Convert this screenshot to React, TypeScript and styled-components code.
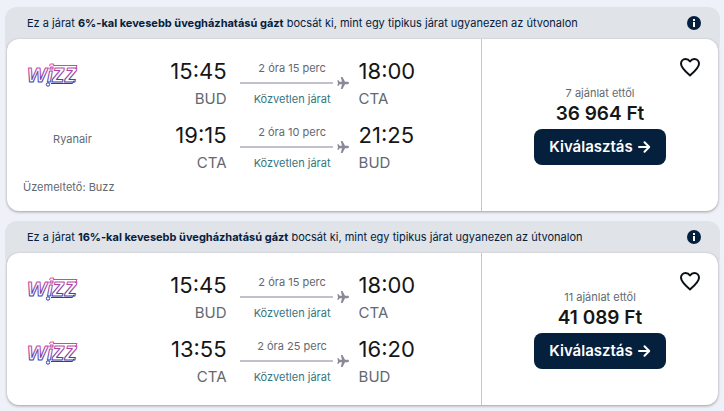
import React from "react";
import styled, { createGlobalStyle } from "styled-components";

const GlobalStyle = createGlobalStyle`
  *, *::before, *::after { box-sizing: border-box; }
  body { margin: 0; background: #eef1f7; color: #161616; font-family: Inter, "Liberation Sans", sans-serif; }
`;

const Results = styled.main`
  display: flex;
  flex-direction: column;
  gap: 10px;
  padding: 7px 4px 6px 5px;
`;

const Ticket = styled.article`
  display: flex;
  flex-direction: column;
`;

const EcoBanner = styled.header`
  display: flex;
  align-items: center;
  justify-content: space-between;
  min-height: 48px;
  padding: 0 19px 16px 22px;
  border-radius: 12px;
  background: #e0e3e8;
  color: #05203c;
  font-size: 11px;
  line-height: 16px;
`;

const BannerText = styled.p`
  margin: 0;
  b { font-weight: 700; }
`;

const IconButton = styled.button`
  display: flex;
  padding: 0;
  border: 0;
  background: none;
  color: #05203c;
  cursor: pointer;
`;

const Card = styled.div`
  display: grid;
  grid-template-columns: 2fr 1fr;
  margin: -16px 2px 0;
  border-radius: 12px;
  background: #fff;
  box-shadow: 0 1px 3px rgba(37, 32, 31, 0.4);
  position: relative;
`;

const Legs = styled.div`
  padding: 16px;
`;

const Leg = styled.section`
  display: grid;
  grid-template-columns: 99px 8fr 112px 9fr;
  column-gap: 10px;
  padding-bottom: 8px;
  &:last-of-type { padding-bottom: 0; }
`;

const Airline = styled.div`
  display: flex;
  align-items: center;
  justify-content: center;
  height: 40px;
  color: #626971;
  font-size: 11px;
  line-height: 16px;
`;

const LogoBox = styled.div`
  padding: 4px;
  svg { display: block; }
`;

const Stop = styled.div<{ $align: "left" | "right" }>`
  text-align: ${(p) => p.$align};
`;

const Time = styled.div`
  font-size: 22px;
  line-height: 32px;
`;

const Code = styled.div`
  color: #626971;
  font-size: 15px;
  line-height: 24px;
`;

const Route = styled.div`
  display: flex;
  flex-direction: column;
  align-items: center;
  padding: 5px 0 0 3px;
  font-size: 11px;
  line-height: 16px;
`;

const Track = styled.div`
  display: flex;
  align-items: center;
  gap: 4px;
  align-self: stretch;
  height: 14px;
  margin-bottom: 1px;
  &::before { content: ""; flex: 1; height: 2px; background: #c0c1cf; }
`;

const RouteLabel = styled.span<{ $direct?: boolean }>`
  padding-right: 4px;
  color: ${(p) => (p.$direct ? "#36757e" : "#626971")};
`;

const Operator = styled.p`
  margin: 4px 0 0;
  color: #626971;
  font-size: 11px;
  line-height: 16px;
`;

const Offer = styled.aside`
  display: flex;
  flex-direction: column;
  align-items: center;
  justify-content: center;
  border-left: 1px solid #c1c7cf;
`;

const OfferCount = styled.span`
  color: #626971;
  font-size: 11px;
  line-height: 16px;
`;

const Price = styled.strong`
  font-size: 19px;
  font-weight: 600;
  line-height: 26px;
  margin-bottom: 2px;
`;

const SelectButton = styled.button`
  display: flex;
  align-items: center;
  justify-content: center;
  gap: 4px;
  height: 36px;
  padding: 0 15px;
  border: 0;
  border-radius: 8px;
  background: #05203c;
  color: #fff;
  font: 600 15px/24px Inter, "Liberation Sans", sans-serif;
  cursor: pointer;
`;

const SaveButton = styled(IconButton)`
  position: absolute;
  top: 16px;
  right: 16px;
`;

const WizzLogo = ({ id }: { id: string }) => (
  <svg width="58" height="32" viewBox="0 0 58 32" role="img" aria-label="Wizz Air">
    <defs>
      <linearGradient id={id} gradientUnits="userSpaceOnUse" x1="0" y1="5" x2="0" y2="25">
        <stop offset="0" stopColor="#e8459f" />
        <stop offset="0.5" stopColor="#8a3fa6" />
        <stop offset="1" stopColor="#2f3aa5" />
      </linearGradient>
    </defs>
    <g fill="none" stroke={`url(#${id})`} strokeWidth="1" strokeLinejoin="round">
      <text y="23" fontFamily="Liberation Sans, sans-serif" fontStyle="italic" fontWeight="700">
        <tspan x="0" fontSize="21">W</tspan>
        <tspan x="20" fontSize="21">i</tspan>
        <tspan x="25" fontSize="25">zz</tspan>
      </text>
      <path d="M22.500 7l.8-2h3.500l-.5 1.500h23.700l-1.500 3.500" />
      <path d="M24 24.500h21.500l1.500-3" />
      <circle cx="21" cy="25.500" r="1.700" />
    </g>
  </svg>
);

const Plane = () => (
  <svg width="12" height="12" viewBox="0 0 12 12" aria-hidden="true">
    <path fill="#8c8799" d="M12 6c0 .6-.6 1.200-1.300 1.200H8L5.500 12H3.800l1.200-4.800H2.600l-1 1.600H.3L1 6 .3 3.200h1.300l1 1.600H5L3.800 0h1.700L8 4.800h2.700C11.400 4.800 12 5.400 12 6z" />
  </svg>
);

const Info = () => (
  <svg width="14" height="14" viewBox="0 0 14 14" aria-hidden="true">
    <circle cx="7" cy="7" r="7" fill="#05203c" />
    <path stroke="#fff" strokeWidth="2" d="M7 6v5M7 3v2" />
  </svg>
);

const Heart = () => (
  <svg width="24" height="24" viewBox="0 0 24 24" fill="none" stroke="#0b0f18" strokeWidth="2" strokeLinejoin="round" aria-hidden="true">
    <path d="M12 20.500C8 17 3 12.800 3 8.800 3 6 5 4 7.500 4 9.500 4 11 5 12 6.500 13 5 14.500 4 16.500 4 19 4 21 6 21 8.800c0 4-5 8.200-9 11.700z" />
  </svg>
);

const Arrow = () => (
  <svg width="14" height="14" viewBox="0 0 14 14" fill="none" stroke="#fff" strokeWidth="2" strokeLinecap="round" strokeLinejoin="round" aria-hidden="true">
    <path d="M2 7h10M7.500 2.200L12.200 7l-4.700 4.800" />
  </svg>
);

type Flight = { airline: string; from: string; to: string; depart: string; arrive: string; duration: string };
type Result = { id: string; saving: string; offers: string; price: string; operator?: string; flights: Flight[] };

const results: Result[] = [
  {
    id: "a", saving: "6%", offers: "7 ajánlat ettől", price: "36 964 Ft", operator: "Üzemeltető: Buzz",
    flights: [
      { airline: "wizz", from: "BUD", to: "CTA", depart: "15:45", arrive: "18:00", duration: "2 óra 15 perc" },
      { airline: "Ryanair", from: "CTA", to: "BUD", depart: "19:15", arrive: "21:25", duration: "2 óra 10 perc" },
    ],
  },
  {
    id: "b", saving: "16%", offers: "11 ajánlat ettől", price: "41 089 Ft",
    flights: [
      { airline: "wizz", from: "BUD", to: "CTA", depart: "15:45", arrive: "18:00", duration: "2 óra 15 perc" },
      { airline: "wizz", from: "CTA", to: "BUD", depart: "13:55", arrive: "16:20", duration: "2 óra 25 perc" },
    ],
  },
];

export default function App() {
  return (
    <>
      <GlobalStyle />
      <Results>
        {results.map((r) => (
          <Ticket key={r.id}>
            <EcoBanner>
              <BannerText>
                Ez a járat <b>{r.saving}-kal kevesebb üvegházhatású gázt</b> bocsát ki, mint egy tipikus járat ugyanezen az útvonalon
              </BannerText>
              <IconButton type="button" aria-label="Információ"><Info /></IconButton>
            </EcoBanner>
            <Card>
              <Legs>
                {r.flights.map((f, i) => (
                  <Leg key={i}>
                    {f.airline === "wizz" ? <LogoBox><WizzLogo id={`wizz-${r.id}${i}`} /></LogoBox> : <Airline>{f.airline}</Airline>}
                    <Stop $align="right"><Time>{f.depart}</Time><Code>{f.from}</Code></Stop>
                    <Route>
                      <RouteLabel>{f.duration}</RouteLabel>
                      <Track><Plane /></Track>
                      <RouteLabel $direct>Közvetlen járat</RouteLabel>
                    </Route>
                    <Stop $align="left"><Time>{f.arrive}</Time><Code>{f.to}</Code></Stop>
                  </Leg>
                ))}
                {r.operator && <Operator>{r.operator}</Operator>}
              </Legs>
              <Offer>
                <OfferCount>{r.offers}</OfferCount>
                <Price>{r.price}</Price>
                <SelectButton type="button">Kiválasztás <Arrow /></SelectButton>
              </Offer>
              <SaveButton type="button" aria-label="Mentés"><Heart /></SaveButton>
            </Card>
          </Ticket>
        ))}
      </Results>
    </>
  );
}
